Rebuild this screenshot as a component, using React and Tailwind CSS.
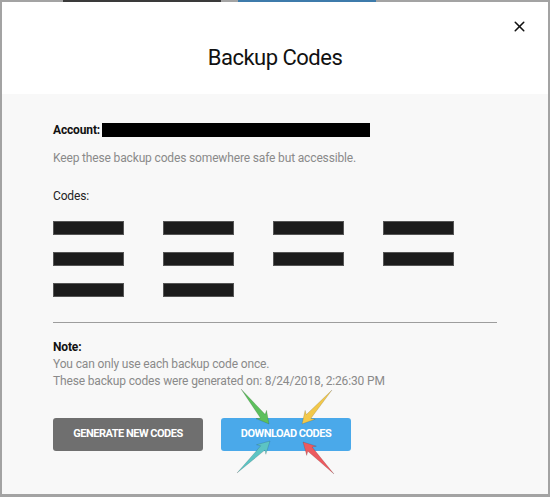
import { X } from "lucide-react";

const codeRows = [
  [1, 2, 3, 4],
  [5, 6, 7, 8],
  [9, 10]
];

function Arrow({ x1, y1, x2, y2, color }) {
  const angle = Math.atan2(y2 - y1, x2 - x1);
  const len = 14;
  const spread = 0.5;
  const ax = x2 - len * Math.cos(angle - spread);
  const ay = y2 - len * Math.sin(angle - spread);
  const bx = x2 - len * Math.cos(angle + spread);
  const by = y2 - len * Math.sin(angle + spread);
  const sx = x2 - 10 * Math.cos(angle);
  const sy = y2 - 10 * Math.sin(angle);
  const nx = -Math.sin(angle);
  const ny = Math.cos(angle);

  return (
    <polygon
      points={`${x1},${y1} ${sx + nx * 3},${sy + ny * 3} ${ax},${ay} ${x2},${y2} ${bx},${by} ${sx - nx * 3},${sy - ny * 3}`}
      fill={color}
      stroke="rgba(0,0,0,0.25)"
      strokeWidth="0.5"
    />
  );
}

function App() {
  return (
    <div
      className="relative w-[550px] h-[497px] bg-[#a3a3a3] px-[2px] pt-[2px] pb-[3px] overflow-hidden"
      style={{ fontFamily: "Roboto, 'Liberation Sans', sans-serif" }}
    >
      <div className="absolute top-0 left-[63px] w-[158px] h-[2px] bg-[#3a3a3a]" />
      <div className="absolute top-0 left-[238px] w-[138px] h-[2px] bg-[#3d7bab]" />

      <div className="h-full flex flex-col">

        <div className="relative h-[92px] bg-white flex items-center justify-center">
          <h1 className="text-[22px] tracking-[-0.5px] text-[#111] pt-[18px]">
            Backup Codes
          </h1>

          <button className="absolute top-[16px] right-[20px] text-[#111]">
            <X size={17} strokeWidth={2.2} />
          </button>
        </div>

        <div className="flex-1 bg-[#f8f8f8] px-[51px] pt-[26px] text-[12px] tracking-[-0.15px]">

          <div className="flex items-center h-[20px]">
            <span className="font-bold text-[#111]">Account:</span>
            <span className="ml-[2px] w-[268px] h-[14px] bg-black" />
          </div>

          <p className="mt-[8px] h-[20px] leading-[20px] text-[#8a8a8a]">
            Keep these backup codes somewhere safe but accessible.
          </p>

          <p className="mt-[18px] h-[20px] leading-[20px] text-[#222]">
            Codes:
          </p>

          <div className="mt-[15px] flex flex-col gap-[17px]">
            {codeRows.map((row, i) => (
              <div key={i} className="flex gap-[39px]">
                {row.map((code) => (
                  <span
                    key={code}
                    className="w-[71px] h-[14px] bg-[#1c1c1c] border border-[#555]"
                  />
                ))}
              </div>
            ))}
          </div>

          <div className="mt-[25px] h-px bg-[#9d9d9d]" />

          <div className="mt-[16px] leading-[17px]">
            <p className="font-bold text-[#111]">Note:</p>
            <p className="text-[#8a8a8a]">You can only use each backup code once.</p>
            <p className="text-[#8a8a8a]">
              These backup codes were generated on: 8/24/2018, 2:26:30 PM
            </p>
          </div>

          <div className="mt-[28px] flex gap-[18px]">
            <button className="w-[150px] h-[33px] rounded-[3px] bg-[#6f6f6f] text-white text-[11px] font-bold tracking-[-0.5px]">
              GENERATE NEW CODES
            </button>

            <button className="w-[130px] h-[33px] rounded-[3px] bg-[#4aa9ea] text-white text-[11px] font-bold tracking-[-0.5px]">
              DOWNLOAD CODES
            </button>
          </div>

        </div>
      </div>

      <svg
        className="absolute inset-0 pointer-events-none"
        width="550"
        height="497"
      >
        <Arrow x1={241} y1={389} x2={269} y2={424} color="#5cbf5c" />
        <Arrow x1={332} y1={390} x2={302} y2={424} color="#f2c84a" />
        <Arrow x1={237} y1={473} x2={270} y2={441} color="#5cc4c4" />
        <Arrow x1={334} y1={474} x2={303} y2={442} color="#ec5a5f" />
      </svg>
    </div>
  );
}

export default App;
